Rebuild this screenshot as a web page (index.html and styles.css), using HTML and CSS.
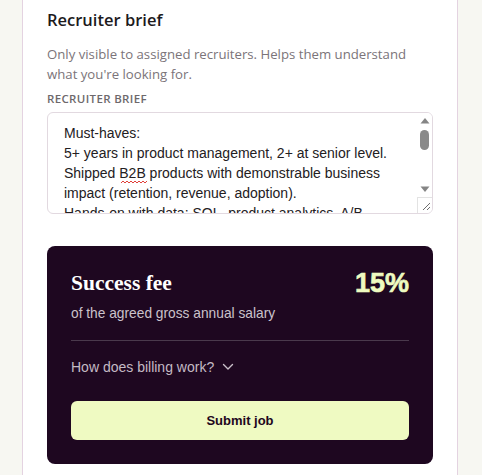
FILE: index.html
```html
<!DOCTYPE html>
<html>
<head>
<meta charset="utf-8">
<link rel="stylesheet" href="styles.css">
</head>
<body>
<div class="panel">
  <h2 class="title">Recruiter brief</h2>
  <p class="desc">Only visible to assigned recruiters. Helps them understand what you're looking for.</p>
  <label class="label" for="brief">RECRUITER BRIEF</label>
  <div class="field">
    <textarea id="brief" class="brief" spellcheck="false">Must-haves:
5+ years in product management, 2+ at senior level.
Shipped B2B products with demonstrable business impact (retention, revenue, adoption).
Hands-on with data: SQL, product analytics, A/B testing.
Strong stakeholder management across engineering, design and sales.
Experience with pricing and packaging is a plus.</textarea>
    <svg class="squiggle" width="26" height="4" viewBox="0 0 26 4"><path d="M0 3 L2 1 L4 3 L6 1 L8 3 L10 1 L12 3 L14 1 L16 3 L18 1 L20 3 L22 1 L24 3 L26 1" fill="none" stroke="#e0403a" stroke-width="1"/></svg>
    <div class="sb">
      <div class="sb-btn"><svg width="10" height="7" viewBox="0 0 10 7"><path d="M0.5 6.5 L5 1 L9.5 6.5 Z" fill="#858585"/></svg></div>
      <div class="sb-track"><div class="sb-thumb"></div></div>
      <div class="sb-btn"><svg width="10" height="7" viewBox="0 0 10 7"><path d="M0.5 0.5 L5 6 L9.5 0.5 Z" fill="#858585"/></svg></div>
      <div class="sb-grip"><svg width="14" height="14" viewBox="0 0 14 14"><path d="M5 12 L12 5 M9 12 L12 9" stroke="#6e6e6e" stroke-width="1"/></svg></div>
    </div>
  </div>
  <div class="fee">
    <div class="fee-head">
      <div class="fee-title">Success fee</div>
      <div class="fee-pct">15%</div>
    </div>
    <div class="fee-sub">of the agreed gross annual salary</div>
    <div class="divider"></div>
    <div class="billing">How does billing work?
      <svg class="chev" width="12" height="8" viewBox="0 0 12 8"><path d="M1.5 1.5 L6 6 L10.5 1.5" fill="none" stroke="#c9bfc9" stroke-width="1.4" stroke-linecap="round" stroke-linejoin="round"/></svg>
    </div>
    <button class="submit">Submit job</button>
  </div>
</div>
</body>
</html>
```
FILE: styles.css
```css
html, body {
  margin: 0;
  padding: 0;
  background: #f7f7f2;
  height: 475px;
  overflow: hidden;
}
.panel {
  margin-left: 22px;
  width: 386px;
  padding: 8px 24px 40px 24px;
  background: #ffffff;
  border-left: 1px solid #e4d3e1;
  border-right: 1px solid #e4d3e1;
  min-height: 480px;
}
.title {
  margin: 0;
  font-family: "Open Sans", sans-serif;
  font-weight: 600;
  font-size: 16.5px;
  line-height: 24px;
  color: #1c1a1c;
}
.desc {
  margin: 12px 0 0 0;
  font-family: "Open Sans", sans-serif;
  font-size: 13.2px;
  line-height: 20px;
  color: #7b7479;
}
.label {
  display: block;
  margin-top: 8px;
  font-family: "Open Sans", sans-serif;
  font-weight: 600;
  font-size: 11.5px;
  line-height: 14px;
  color: #6d686b;
  letter-spacing: 0.35px;
}
.field {
  position: relative;
  margin-top: 6px;
}
.brief {
  display: block;
  box-sizing: border-box;
  width: 386px;
  height: 102px;
  padding: 10px 31px 8px 16px;
  border: 1px solid #e2d9e0;
  border-radius: 6px;
  font-family: "Liberation Sans", Arial, sans-serif;
  font-size: 14px;
  line-height: 20px;
  color: #232022;
  resize: none;
  outline: none;
  overflow: hidden;
}
.squiggle {
  position: absolute;
  left: 74px;
  top: 68px;
}
.sb {
  position: absolute;
  top: 1px;
  right: 1px;
  bottom: 1px;
  width: 15px;
  display: flex;
  flex-direction: column;
  align-items: center;
  border-radius: 0 5px 5px 0;
  background: #ffffff;
}
.sb-btn {
  height: 14px;
  width: 15px;
  display: flex;
  align-items: center;
  justify-content: center;
}
.sb-track {
  flex: 1;
  padding-top: 3px;
}
.sb-thumb {
  width: 9px;
  height: 20px;
  border-radius: 5px;
  background: #8a8a8a;
}
.sb-grip {
  box-sizing: border-box;
  width: 15px;
  height: 16px;
  margin-top: 1px;
  border-top: 1px solid #e3e3e3;
  border-left: 1px solid #e3e3e3;
  border-bottom-right-radius: 5px;
}
.sb-grip svg {
  display: block;
}
.fee {
  margin-top: 32px;
  background: #1e0720;
  border-radius: 8px;
  padding: 22px 24px 24px 24px;
}
.fee-head {
  display: flex;
  justify-content: space-between;
  align-items: center;
}
.fee-title {
  font-family: "Liberation Serif", serif;
  font-weight: bold;
  font-size: 21.5px;
  color: #ffffff;
}
.fee-pct {
  font-family: "Liberation Sans", Arial, sans-serif;
  font-weight: bold;
  font-size: 27px;
  line-height: 30px;
  color: #eefac0;
  -webkit-text-stroke: 0.6px #eefac0;
}
.fee-sub {
  margin-top: 7px;
  font-family: "Liberation Sans", Arial, sans-serif;
  font-size: 13.75px;
  line-height: 18px;
  color: #cbc2cb;
}
.divider {
  margin-top: 17px;
  height: 1px;
  background: #4a394c;
}
.billing {
  margin-top: 16px;
  display: flex;
  align-items: center;
  gap: 8px;
  font-family: "Liberation Sans", Arial, sans-serif;
  font-size: 14px;
  line-height: 20px;
  color: #c4bac4;
}
.submit {
  display: block;
  margin-top: 24px;
  width: 100%;
  height: 39px;
  border: none;
  border-radius: 6px;
  background: #effac2;
  font-family: "Liberation Sans", Arial, sans-serif;
  font-weight: bold;
  font-size: 13px;
  color: #1e0720;
}
```
